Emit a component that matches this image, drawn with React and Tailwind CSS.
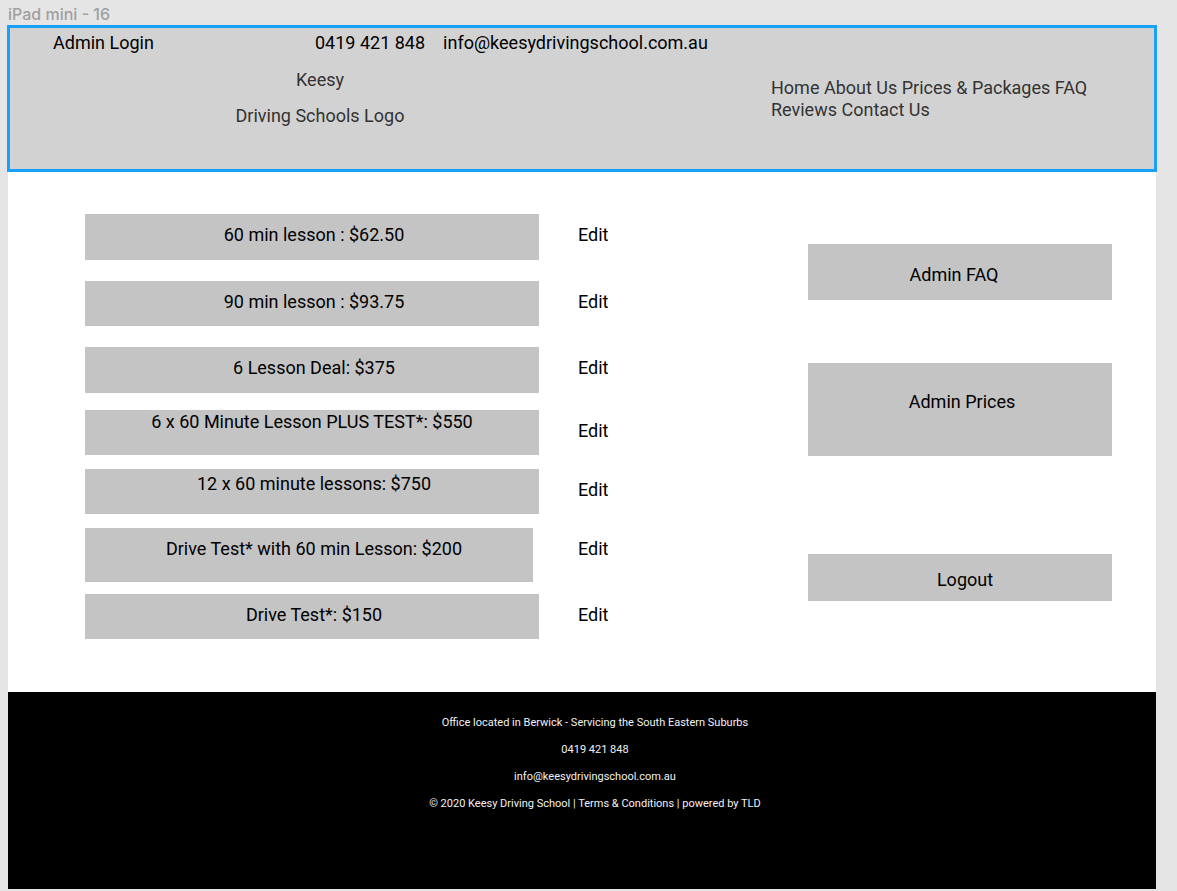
const prices = [
  { label: "60 min lesson : $62.50", row: "mb-[21px]", bar: "h-[46px] pt-2.5 pl-1" },
  { label: "90 min lesson : $93.75", row: "mb-[21px]", bar: "h-[45px] pt-2.5 pl-1" },
  { label: "6 Lesson Deal: $375", row: "mb-[17px]", bar: "h-[46px] pt-2.5 pl-1" },
  { label: "6 x 60 Minute Lesson PLUS TEST*: $550", row: "mb-3.5", bar: "h-[45px] pt-px" },
  { label: "12 x 60 minute lessons: $750", row: "mb-3.5", bar: "h-[45px] pt-1 pl-1" },
  { label: "Drive Test* with 60 min Lesson: $200", row: "mb-3", bar: "h-[54px] mr-1.5 pt-2.5 pl-2.5" },
  { label: "Drive Test*: $150", row: "", bar: "h-[45px] pt-2.5 pl-1" },
];

const navLinks = ["Home", "About Us", "Prices & Packages", "FAQ", "Reviews", "Contact Us"];

function Header() {
  return (
    <header className="relative bg-[#d2d2d2] pt-1.5 pb-[37px] outline-3 -outline-offset-2 outline-[#18a0fb]">
      <div className="flex pl-[45px]">
        <a href="#login" className="w-[262px]">Admin Login</a>
        <div className="flex gap-[18px]">
          <a href="tel:0419421848">0419 421 848</a>
          <a href="mailto:info@keesydrivingschool.com.au">info@keesydrivingschool.com.au</a>
        </div>
      </div>
      <div className="mt-2 grid grid-cols-[624fr_524fr] items-center text-[#333333]">
        <div className="text-center leading-9">
          <p>Keesy</p>
          <p>Driving Schools Logo</p>
        </div>
        <nav className="pt-0.5 pr-8 pl-[139px]">
          {navLinks.map((name) => (
            <span key={name}>
              <a href="#nav">{name}</a>{" "}
            </span>
          ))}
        </nav>
      </div>
    </header>
  );
}

function PriceList() {
  return (
    <ul>
      {prices.map((p) => (
        <li key={p.label} className={`grid grid-cols-[454fr_269fr] items-start ${p.row}`}>
          <div className={`bg-[#c4c4c4] text-center ${p.bar}`}>{p.label}</div>
          <div className="pt-2.5 pl-[39px]">
            <button type="button" aria-label={`Edit ${p.label}`}>Edit</button>
          </div>
        </li>
      ))}
    </ul>
  );
}

function AdminMenu() {
  return (
    <nav className="flex flex-col pt-[30px] text-center">
      <a href="#faq" className="mb-[63px] h-14 bg-[#c4c4c4] pt-5 pr-3">Admin FAQ</a>
      <a href="#prices" className="mb-[98px] h-[93px] bg-[#c4c4c4] pt-7 pl-1">Admin Prices</a>
      <button type="button" className="h-[47px] bg-[#c4c4c4] pt-1 pl-2.5">Logout</button>
    </nav>
  );
}

function Footer() {
  return (
    <footer className="grow bg-black pt-[17px] pb-[72px] pl-[26px] text-center text-[11px] leading-[27px] text-[#f2f2f2]">
      <p>Office located in Berwick - Servicing the South Eastern Suburbs</p>
      <p>0419 421 848</p>
      <p>info@keesydrivingschool.com.au</p>
      <p>© 2020 Keesy Driving School | Terms &amp; Conditions | powered by TLD</p>
    </footer>
  );
}

export default function App() {
  return (
    <div className="flex min-h-screen flex-col bg-[#e5e5e5] pr-[21px] pb-0.5 pl-2 font-['Roboto',sans-serif] text-lg leading-[22px] text-black">
      <div className="h-[26px] pt-[3px] font-['Inter',sans-serif] text-base leading-[22px] font-medium text-[#9f9f9f]">
        iPad mini - 16
      </div>
      <Header />
      <main className="grid grid-cols-[723fr_304fr] bg-white pt-[43px] pr-11 pb-[53px] pl-[77px]">
        <PriceList />
        <AdminMenu />
      </main>
      <Footer />
    </div>
  );
}
